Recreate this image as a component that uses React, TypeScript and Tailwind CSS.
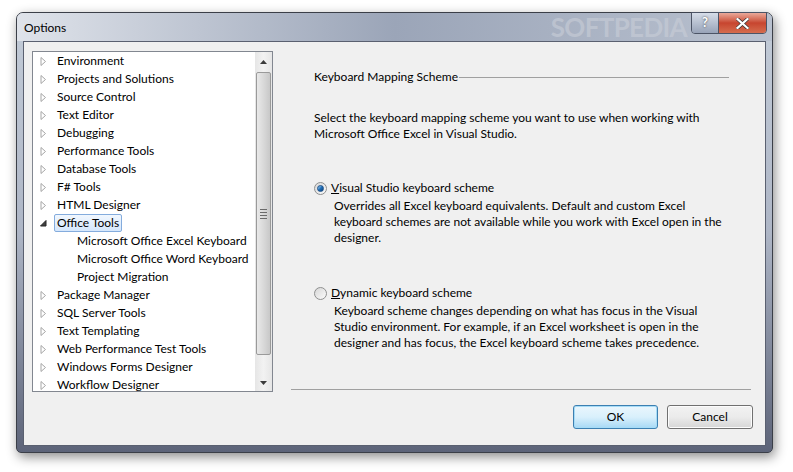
import React from "react";

const font = { fontFamily: "'Segoe UI', Lato, 'Noto Sans', sans-serif" };

type Node = { label: string; state: "closed" | "open" | "leaf"; selected?: boolean };

const tree: Node[] = [
  { label: "Environment", state: "closed" },
  { label: "Projects and Solutions", state: "closed" },
  { label: "Source Control", state: "closed" },
  { label: "Text Editor", state: "closed" },
  { label: "Debugging", state: "closed" },
  { label: "Performance Tools", state: "closed" },
  { label: "Database Tools", state: "closed" },
  { label: "F# Tools", state: "closed" },
  { label: "HTML Designer", state: "closed" },
  { label: "Office Tools", state: "open", selected: true },
  { label: "Microsoft Office Excel Keyboard", state: "leaf" },
  { label: "Microsoft Office Word Keyboard", state: "leaf" },
  { label: "Project Migration", state: "leaf" },
  { label: "Package Manager", state: "closed" },
  { label: "SQL Server Tools", state: "closed" },
  { label: "Text Templating", state: "closed" },
  { label: "Web Performance Test Tools", state: "closed" },
  { label: "Windows Forms Designer", state: "closed" },
  { label: "Workflow Designer", state: "closed" },
];

function Glyph({ state }: { state: Node["state"] }) {
  if (state === "leaf") return <span className="w-[19px]" />;
  return (
    <span className="w-[19px] flex items-center justify-center">
      {state === "closed" ? (
        <svg width="7" height="9" viewBox="0 0 7 9">
          <path d="M1 0.5 L5.5 4.5 L1 8.5 Z" fill="white" stroke="#a6a6a6" strokeWidth="1" />
        </svg>
      ) : (
        <svg width="7" height="7" viewBox="0 0 7 7">
          <path d="M6 0.5 L6 6 L0.5 6 Z" fill="#404040" stroke="#262626" strokeWidth="1" />
        </svg>
      )}
    </span>
  );
}

function Radio({ checked }: { checked: boolean }) {
  return (
    <span className="w-[13px] h-[13px] rounded-full border border-[#8e8f8f] bg-gradient-to-br from-[#d7d7d7] to-[#fbfbfb] flex items-center justify-center shrink-0">
      {checked && (
        <span className="w-[7px] h-[7px] rounded-full bg-gradient-to-br from-[#a4d8f5] via-[#1f6fb9] to-[#0d3f78] border border-[#1b4f88]" />
      )}
    </span>
  );
}

export default function App() {
  return (
    <div className="w-[793px] h-[472px] bg-white pt-[12px] pl-[16px] overflow-hidden" style={font}>
      <div className="w-[757px] h-[441px] rounded-t-[7px] rounded-b-[5px] border border-[#3b3f48] bg-gradient-to-b from-[#c3ccd8] via-[#aeb6c6] to-[#5d6479] shadow-[2px_4px_12px_rgba(0,0,0,0.45)] flex flex-col px-[6px] pb-[6px]">
        {/* title bar */}
        <div className="h-[28px] flex items-start relative bg-gradient-to-r from-[#dfe3ea] via-[#9ba5b8] to-[#b9c1cf] -mx-[6px] px-[6px] rounded-t-[6px]">
          <span className="text-[12px] text-black mt-[6px] ml-[1px]">Options</span>
          <span className="ml-auto mr-[4px] mt-[1px] text-[26px] font-bold tracking-tight text-[#c9ced8]/60 leading-none">SOFTPEDIA</span>
          <div className="flex border border-[#4c5466] rounded-b-[4px] overflow-hidden mr-[-1px] -mt-[1px]">
            <div className="w-[27px] h-[20px] bg-gradient-to-b from-[#d6dde8] to-[#98a3b8] flex items-center justify-center border-r border-[#4c5466] text-white font-bold text-[13px]" style={{ textShadow: "0 0 2px #333" }}>
              ?
            </div>
            <div className="w-[47px] h-[20px] bg-gradient-to-b from-[#e9a99a] via-[#c7452f] to-[#d56c4e] flex items-center justify-center">
              <svg width="13" height="11" viewBox="0 0 13 11">
                <path d="M1.5 1 L11.5 10 M11.5 1 L1.5 10" stroke="#333" strokeWidth="3.6" strokeLinecap="square" />
                <path d="M1.5 1 L11.5 10 M11.5 1 L1.5 10" stroke="white" strokeWidth="2.2" strokeLinecap="square" />
              </svg>
            </div>
          </div>
        </div>

        {/* client */}
        <div className="flex-1 bg-[#f0f0f0] border border-[#5a6070] flex flex-col">
          <div className="flex flex-1">
            {/* tree */}
            <div className="ml-[8px] mt-[9px] w-[241px] h-[341px] border border-[#828790] bg-white flex overflow-hidden">
              <div className="flex-1 text-[12px] text-black">
                {tree.map((n) => (
                  <div key={n.label} className={`h-[18px] flex items-center ${n.state === "leaf" ? "pl-[40px]" : "pl-[1px]"}`}>
                    {n.state !== "leaf" && <Glyph state={n.state} />}
                    <span
                      className={
                        n.selected
                          ? "ml-[1px] px-[2px] h-[18px] leading-[16px] border border-[#84acdd] rounded-[2px] bg-gradient-to-b from-[#f1f7fe] to-[#d5e7fc]"
                          : "ml-[4px] leading-[16px] whitespace-nowrap"
                      }
                    >
                      {n.label}
                    </span>
                  </div>
                ))}
              </div>
              {/* scrollbar */}
              <div className="w-[17px] bg-gradient-to-r from-[#e6e6e6] via-[#f2f2f2] to-[#e6e6e6] flex flex-col items-center">
                <div className="h-[20px] w-full flex items-center justify-center">
                  <svg width="7" height="4" viewBox="0 0 7 4"><path d="M0 4 L3.5 0 L7 4 Z" fill="#3b3b3b" /></svg>
                </div>
                <div className="w-[15px] h-[283px] rounded-[2px] border border-[#9a9a9a] bg-gradient-to-r from-[#e9e9e9] via-[#d9d9d9] to-[#c8c8c8] flex flex-col items-center justify-center gap-[2px]">
                  <span className="w-[7px] h-px bg-[#6a6a6a]" />
                  <span className="w-[7px] h-px bg-[#6a6a6a]" />
                  <span className="w-[7px] h-px bg-[#6a6a6a]" />
                  <span className="w-[7px] h-px bg-[#6a6a6a]" />
                </div>
                <div className="flex-1 w-full flex items-end justify-center pb-[6px]">
                  <svg width="7" height="4" viewBox="0 0 7 4"><path d="M0 0 L3.5 4 L7 0 Z" fill="#3b3b3b" /></svg>
                </div>
              </div>
            </div>

            {/* settings panel */}
            <div className="flex-1 pl-[41px] pr-[36px] pt-[27px] text-[12px] text-black">
              <div className="flex items-center h-[16px]">
                <span className="whitespace-nowrap">Keyboard Mapping Scheme</span>
                <span className="flex-1 h-[2px] border-t border-[#a0a0a0] border-b-white ml-[1px] mt-[2px]" />
              </div>
              <p className="mt-[25px] leading-[16px]">
                Select the keyboard mapping scheme you want to use when working with
                <br />
                Microsoft Office Excel in Visual Studio.
              </p>
              <div className="mt-[38px] flex items-center gap-[4px] h-[16px]">
                <Radio checked />
                <span>
                  <span className="underline">V</span>isual Studio keyboard scheme
                </span>
              </div>
              <p className="pl-[20px] leading-[16px] mt-[2px]">
                Overrides all Excel keyboard equivalents. Default and custom Excel
                <br />
                keyboard schemes are not available while you work with Excel open in the
                <br />
                designer.
              </p>
              <div className="mt-[39px] flex items-center gap-[4px] h-[16px]">
                <Radio checked={false} />
                <span>
                  <span className="underline">D</span>ynamic keyboard scheme
                </span>
              </div>
              <p className="pl-[20px] leading-[16px] mt-[2px]">
                Keyboard scheme changes depending on what has focus in the Visual
                <br />
                Studio environment. For example, if an Excel worksheet is open in the
                <br />
                designer and has focus, the Excel keyboard scheme takes precedence.
              </p>
            </div>
          </div>

          {/* footer */}
          <div className="ml-[267px] mr-[14px] border-t border-[#a0a0a0] mt-[-6px]" />
          <div className="flex justify-end gap-[9px] pr-[12px] pt-[15px] pb-[16px] text-[12px]">
            <button className="w-[85px] h-[24px] rounded-[3px] border border-[#3c7fb1] shadow-[0_0_0_1px_#a6dcf7_inset] bg-gradient-to-b from-[#eaf6fd] via-[#d9f0fc] to-[#a7d9f5] text-black">
              OK
            </button>
            <button className="w-[86px] h-[24px] rounded-[3px] border border-[#707070] shadow-[0_0_0_1px_#fcfcfc_inset] bg-gradient-to-b from-[#f2f2f2] via-[#ebebeb] to-[#d6d6d6] text-black">
              Cancel
            </button>
          </div>
        </div>
      </div>
    </div>
  );
}
